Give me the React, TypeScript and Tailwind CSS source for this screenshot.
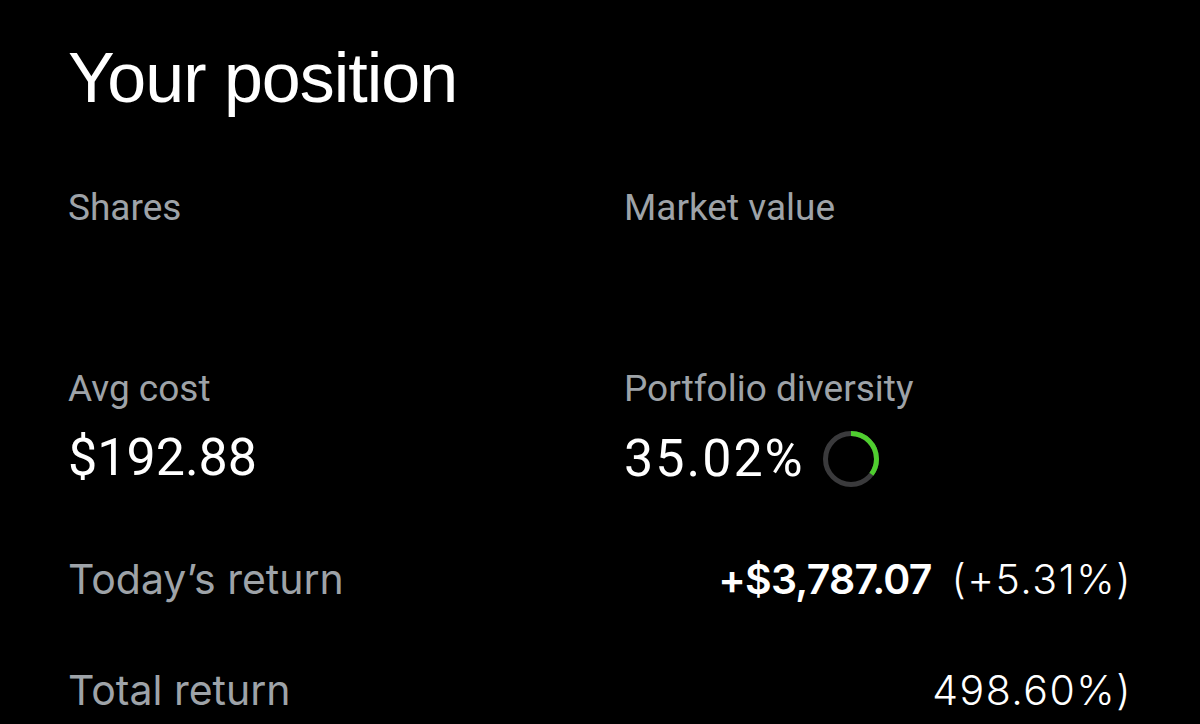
import React from 'react';

const label = "text-[#9ea3a8] text-[37px] leading-[42px] font-['Roboto',sans-serif]";

const DiversityRing = ({ percent }: { percent: number }) => {
  const r = 25.5;
  const c = 2 * Math.PI * r;
  return (
    <svg width="58" height="58" viewBox="0 0 58 58" className="ml-[17px]">
      <circle cx="29" cy="29" r={r} fill="none" stroke="#3a3a3c" strokeWidth="5" />
      <circle
        cx="29"
        cy="29"
        r={r}
        fill="none"
        stroke="#4fce2f"
        strokeWidth="5"
        strokeDasharray={`${(c * percent) / 100} ${c}`}
        transform="rotate(-90 29 29)"
      />
    </svg>
  );
};

export default function App() {
  return (
    <div className="min-h-screen bg-black text-white px-[68px] overflow-hidden font-['Liberation_Sans',sans-serif]">
      <h1 className="pt-[43px] text-[70px] leading-[70px] tracking-[-1px]">Your position</h1>

      <div className="grid grid-cols-[556px_1fr] mt-[74px]">
        <div className={label}>Shares</div>
        <div className={label}>Market value</div>
      </div>

      <div className="grid grid-cols-[556px_1fr] mt-[139px]">
        <div>
          <div className={label}>Avg cost</div>
          <div className="mt-[20px] text-[52px] leading-[56px] font-['Roboto',sans-serif]">$192.88</div>
        </div>
        <div>
          <div className={label}>Portfolio diversity</div>
          <div className="mt-[20px] flex items-center">
            <span className="text-[52px] leading-[56px] tracking-[2px] font-['Roboto',sans-serif]">35.02%</span>
            <DiversityRing percent={35.02} />
          </div>
        </div>
      </div>

      <div className="mt-[66px] flex justify-between items-baseline font-['Inter',sans-serif] text-[41px] leading-[50px]">
        <span className="text-[#9ea3a8]">Today’s return</span>
        <span>
          <span className="font-semibold tracking-[-0.8px]">+$3,787.07</span>
          <span className="ml-[20px] font-light tracking-[1.5px]">(+5.31%)</span>
        </span>
      </div>

      <div className="mt-[61px] flex justify-between items-baseline font-['Inter',sans-serif] text-[41px] leading-[50px]">
        <span className="text-[#9ea3a8]">Total return</span>
        <span className="font-light tracking-[1.5px]">498.60%)</span>
      </div>
    </div>
  );
}
